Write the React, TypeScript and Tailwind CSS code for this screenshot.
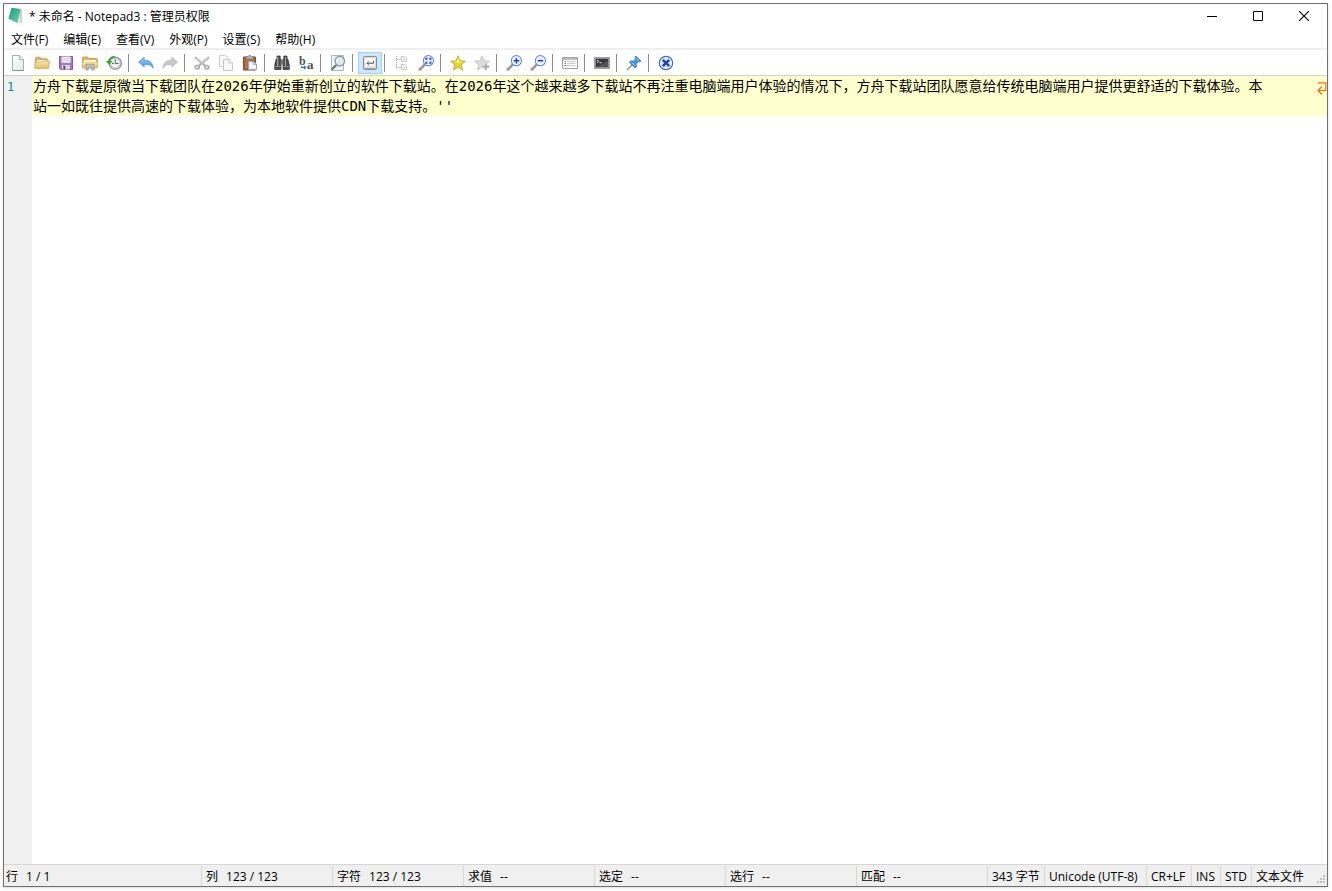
import { useState } from 'react';
import type { ReactNode } from 'react';

type Tool = { label: string; icon: ReactNode; active?: boolean; disabled?: boolean };

function Icon({ children }: { children: ReactNode }) {
  return (
    <svg viewBox="0 0 16 16" className="size-4 shrink-0" aria-hidden="true" fill="none">
      {children}
    </svg>
  );
}

function Lens({ children }: { children: ReactNode }) {
  return (
    <Icon>
      <path d="M1.2 15 6.5 9.7" stroke="#8a8682" strokeWidth="2.6" />
      <path d="M1 14.4 6 9.4" stroke="#d0ccc8" strokeWidth="1" />
      <circle cx="10.4" cy="5.7" r="5" fill="#e4edff" stroke="#6785d8" strokeWidth="1.2" />
      <circle cx="10.4" cy="5.7" r="4" stroke="#fff" strokeWidth=".8" />
      {children}
    </Icon>
  );
}

const star = 'M8 .8l2.1 5 5.3.4-4.1 3.5 1.3 5.3L8 12.1 3.4 15l1.3-5.3L.6 6.2l5.3-.4z';

const groups: Tool[][] = [
  [
    {
      label: '新建',
      icon: (
        <Icon>
          <path d="M2.5.5h7.2l3.8 3.8v11.2h-11z" fill="url(#page)" stroke="#9fb2b1" />
          <path d="M9.5.8v3.7h3.7" fill="#fff" stroke="#9fb2b1" />
          <path d="M2.5 15.5h11" stroke="#7c9391" />
        </Icon>
      ),
    },
    {
      label: '打开',
      icon: (
        <Icon>
          <path d="M1.5 13V3.2q0-1 1-1h3.7l1.2 1.6h5.2q1 0 1 1V7" fill="#d8b267" stroke="#cda55b" />
          <path d="M3 5h10v3H3z" fill="#fffbe9" />
          <path d="M.6 13.4 1.2 7h5.3l1-1h8l-1 7.4z" fill="url(#folder)" stroke="#d0a557" strokeWidth=".8" />
        </Icon>
      ),
    },
    {
      label: '保存',
      icon: (
        <Icon>
          <path d="M1.5 1.5h13v13H2.8l-1.3-1.3z" fill="#a47bc2" stroke="#8259a4" />
          <path d="M3.5 1.5h9v6.3h-9z" fill="#f4eff8" />
          <path d="M4.5 3.5h7M4.5 5.5h7" stroke="#d5c9df" />
          <path d="M4 10h8v4.5H4z" fill="#d9d5e1" />
          <path d="M5.3 10.8h2v3.5h-2z" fill="#63408a" />
        </Icon>
      ),
    },
    {
      label: '打开文件位置',
      icon: (
        <Icon>
          <path d="M.6 13V3q0-1 1-1h4l1.2 1.5h7.6q1 0 1 1V13z" fill="#dfb961" stroke="#bd9143" strokeWidth=".8" />
          <path d="M2 5h12v2H2z" fill="#fff7d8" />
          <path d="M.6 7.3h14.8V13H.6z" fill="url(#folder)" />
          <path d="M4 15V9.2h8V15H9.8v-3H6.2v3z" fill="#c5c5c5" stroke="#868686" strokeWidth=".7" />
        </Icon>
      ),
    },
    {
      label: '历史记录',
      icon: (
        <Icon>
          <circle cx="9.3" cy="8.3" r="6" fill="#f0f0f0" stroke="#999" strokeWidth="1.5" />
          <circle cx="9.3" cy="8.3" r="4.4" stroke="#c7c7c7" strokeWidth=".7" />
          <path d="M9.3 4.5v4h3.3M6 8.4h2" stroke="#5b645f" />
          <path d="M8.7 1.8C5.5 1.8 3.3 4 3 6.5" stroke="#35a83a" strokeWidth="2.1" />
          <path d="M0 6.1h6.2L3.1 10z" fill="#2aa930" />
        </Icon>
      ),
    },
  ],
  [
    {
      label: '撤销',
      icon: (
        <Icon>
          <path d="M.5 7.1 6.2 2.2v2.9c5.2-.2 8.6 2.8 9 8.1-1.9-3.1-4.6-4-9-3.7V12z" fill="url(#undo)" stroke="#4a92d2" strokeWidth=".7" />
        </Icon>
      ),
    },
    {
      label: '重做',
      disabled: true,
      icon: (
        <Icon>
          <path d="M15.5 7.1 9.8 2.2v2.9C4.6 4.9 1.2 7.9.8 13.2c1.9-3.1 4.6-4 9-3.7V12z" fill="#c9c9c9" stroke="#b3b3b3" strokeWidth=".7" />
        </Icon>
      ),
    },
  ],
  [
    {
      label: '剪切',
      disabled: true,
      icon: (
        <Icon>
          <path d="m1 2.2 10.3 8.6M15 2.2 4.7 10.8" stroke="#b4b4b4" strokeWidth="2.3" />
          <path d="m1.5 2 7.5 6.2M14.5 2 7 8.2" stroke="#e2e2e2" strokeWidth=".8" />
          <ellipse cx="3.2" cy="12.2" rx="2.1" ry="1.6" stroke="#b0b0b0" strokeWidth="1.8" />
          <ellipse cx="12.8" cy="12.2" rx="2.1" ry="1.6" stroke="#b0b0b0" strokeWidth="1.8" />
        </Icon>
      ),
    },
    {
      label: '复制',
      disabled: true,
      icon: (
        <Icon>
          <path d="M1.5.5h6L10 3v8.5H1.5z" fill="#fafafa" stroke="#cfcfcf" />
          <path d="M5.5 4.5H11l3.5 3.3v7.7h-9z" fill="#f7f7f7" stroke="#c6c6c6" />
          <path d="M10.8 4.7V8h3.5" fill="#fff" stroke="#cacaca" />
        </Icon>
      ),
    },
    {
      label: '粘贴',
      icon: (
        <Icon>
          <path d="M1.5 2h12v13h-12z" fill="#a9603a" stroke="#8a4a28" />
          <path d="M3.2 4h8.6v9.3H3.2z" fill="#b87048" />
          <path d="M4 1.5h2L7 .3h1.5l1 1.2h2V4H4z" fill="#b5b5b5" stroke="#777" strokeWidth=".7" />
          <path d="M6.5 6.5h5L14.5 9v5.5h-8z" fill="#f2f8fa" stroke="#8fa8ae" />
          <path d="M11.3 6.8v2.5h3" stroke="#8fa8ae" />
        </Icon>
      ),
    },
  ],
  [
    {
      label: '查找',
      icon: (
        <Icon>
          <path d="M3 1h3.2v3H7v10.5H.7V9.8L2.2 4H3zM9.8 1H13v3h.8l1.5 5.8v4.7H9V4h.8z" fill="#4b4b4b" stroke="#333" strokeWidth=".7" />
          <path d="M6.5 5h3v4.5h-3z" fill="#747474" />
          <path d="M3.7 2v9M11.5 2v9" stroke="#aaa" strokeWidth="1.1" />
          <path d="M1 11.6h5.8M9.2 11.6H15" stroke="#8e8e8e" />
        </Icon>
      ),
    },
    {
      label: '替换',
      icon: (
        <Icon>
          <text x="1" y="10" fontFamily="Liberation Serif, serif" fontSize="12" fontWeight="bold" fill="#505050">b</text>
          <text x="9" y="14" fontFamily="Liberation Serif, serif" fontSize="13" fontWeight="bold" fill="#505050">a</text>
          <path d="M3.5 11v1.5h3.3M5.8 10.8l2 1.7-2 1.7" stroke="#2e69cc" strokeWidth="1.1" />
        </Icon>
      ),
    },
  ],
  [
    {
      label: '查看方案',
      icon: (
        <Icon>
          <path d="M1.5.5h12v15h-12z" fill="#edf4f5" stroke="#a6bbc0" />
          <path d="m1.5 14.7 4.7-4.6" stroke="#777" strokeWidth="2.2" />
          <circle cx="9.8" cy="6.1" r="4.8" fill="#dceaf3" stroke="#8795a0" strokeWidth="1.2" />
          <path d="M6.5 6.5c.2-2 1.3-3 3-3" stroke="#fff" />
        </Icon>
      ),
    },
  ],
  [
    {
      label: '自动换行',
      active: true,
      icon: (
        <Icon>
          <rect x="1.5" y="1.5" width="13" height="13" rx="1" fill="#dcdcdc" stroke="#8b8b8b" />
          <path d="M3 3h10v8.5H3z" fill="#f8f8f8" />
          <path d="M2 13.5h12" stroke="#aaa" />
          <path d="M11.5 6v2.3H5M7 6.3l-2 2 2 2" stroke="#555" />
        </Icon>
      ),
    },
  ],
  [
    {
      label: '代码折叠',
      disabled: true,
      icon: (
        <Icon>
          <path d="M2.5 1v12M2.5 4.5H7M2.5 12.5H7" stroke="#aaa" strokeDasharray="1 1" />
          <path d="M7.5 1.5h3l2 2v3h-5zM7.5 9.5h3l2 2v3h-5z" fill="#fafafa" stroke="#c7c7c7" />
          <path d="M9 4.5h2M9 12.5h2" stroke="#c5c5c5" />
        </Icon>
      ),
    },
    {
      label: '缩放重置',
      icon: (
        <Lens>
          <path d="M8 4.9V3.3h1.6M11.2 3.3h1.6v1.6M12.8 6.6v1.6h-1.6M9.6 8.2H8V6.6" stroke="#1640c2" strokeWidth="1.2" />
        </Lens>
      ),
    },
  ],
  [
    {
      label: '收藏夹',
      icon: (
        <Icon>
          <path d={star} fill="#e6d332" stroke="#b5a329" strokeWidth=".8" />
          <path d="m8 2.5 1.4 4.1 4.1.4-5.5 1-5-1 3.6-.5z" fill="#f8ee83" />
        </Icon>
      ),
    },
    {
      label: '添加到收藏夹',
      disabled: true,
      icon: (
        <Icon>
          <path d={star} fill="#dcdcdc" stroke="#bdbdbd" strokeWidth=".8" />
          <path d="M10.5 8h2.6v2.3h2.4v2.6h-2.4v2.4h-2.6v-2.4H8.2v-2.6h2.3z" fill="#ababab" stroke="#fff" strokeWidth=".5" />
        </Icon>
      ),
    },
  ],
  [
    { label: '放大', icon: <Lens><path d="M7.6 5.7h5.6M10.4 2.9v5.6" stroke="#1c45bd" strokeWidth="1.5" /></Lens> },
    { label: '缩小', icon: <Lens><path d="M7.6 5.7h5.6" stroke="#1c45bd" strokeWidth="1.5" /></Lens> },
  ],
  [
    {
      label: '选择方案',
      icon: (
        <Icon>
          <path d="M.5 2.5h15v11H.5z" fill="#fafafa" stroke="#a2a2a2" />
          <path d="M1 3h14v2H1z" fill="#bdbdbd" />
          <path d="M5 6.5h8.5M5 8.5h8.5M5 10.5h8.5" stroke="#c0c0c0" strokeWidth=".8" />
          <path d="M2.5 6.5H4" stroke="#4ba44b" />
          <path d="M2.5 8.5H4" stroke="#cc6655" />
          <path d="M2.5 10.5H4" stroke="#5576c0" />
        </Icon>
      ),
    },
  ],
  [
    {
      label: '命令提示符',
      icon: (
        <Icon>
          <path d="M.5 2.5h15v11H.5z" fill="#909090" stroke="#a0a0a0" />
          <path d="M2 4h12v8H2z" fill="#36383c" />
          <path d="m2 12 12-6v6z" fill="#52555a" />
          <path d="m3 5 1.8 1.3L3 7.6M5.5 7.7h2.3" stroke="#fff" strokeWidth=".8" />
        </Icon>
      ),
    },
  ],
  [
    {
      label: '置顶',
      icon: (
        <Icon>
          <path d="m1 15 5.5-5.5" stroke="#888" strokeWidth="1.3" />
          <path d="m9.8 1 5.2 5.2-1.6.7-1.1-.3-2.2 2.3.3 3.2-1.3.9L3.4 7.2l1-1.3 3.1.2L9.7 4l-.5-1.4z" fill="#4598df" stroke="#2875bd" strokeWidth=".8" />
          <path d="m10.2 3.4 2.3 2.3M5.3 7l4 4" stroke="#a7d6fb" strokeWidth=".9" />
        </Icon>
      ),
    },
  ],
  [
    {
      label: '退出',
      icon: (
        <Icon>
          <circle cx="8" cy="8" r="6.7" fill="#f3f6ff" stroke="#4468bc" strokeWidth="1.2" />
          <circle cx="8" cy="8" r="5.1" fill="#dfe8fb" />
          <path d="m4.8 4.8 6.4 6.4M11.2 4.8l-6.4 6.4" stroke="#1947b0" strokeWidth="2.5" />
        </Icon>
      ),
    },
  ],
];

const menus = ['文件(F)', '编辑(E)', '查看(V)', '外观(P)', '设置(S)', '帮助(H)'];

const fields = [
  ['列', '123 / 123'],
  ['字符', '123 / 123'],
  ['求值', '--'],
  ['选定', '--'],
  ['选行', '--'],
  ['匹配', '--'],
];

const modes = [
  { text: '343 字节', width: 'w-[57px]' },
  { text: 'Unicode (UTF-8)', width: 'w-[102px]' },
  { text: 'CR+LF', width: 'w-[45px]' },
  { text: 'INS', width: 'w-[29px]' },
  { text: 'STD', width: 'w-[31px]' },
  { text: '文本文件', width: 'w-[64px]' },
];

const initialText =
  "方舟下载是原微当下载团队在2026年伊始重新创立的软件下载站。在2026年这个越来越多下载站不再注重电脑端用户体验的情况下，方舟下载站团队愿意给传统电脑端用户提供更舒适的下载体验。本\n站一如既往提供高速的下载体验，为本地软件提供CDN下载支持。''";

function Gradients() {
  return (
    <svg className="absolute size-0" aria-hidden="true">
      <defs>
        <linearGradient id="page" x1="0" y1="0" x2="1" y2="1">
          <stop offset="0" stopColor="#fff" />
          <stop offset="1" stopColor="#dcebea" />
        </linearGradient>
        <linearGradient id="folder" x1="0" y1="0" x2="0" y2="1">
          <stop offset="0" stopColor="#fae8ad" />
          <stop offset="1" stopColor="#e6bc62" />
        </linearGradient>
        <linearGradient id="undo" x1="0" y1="0" x2="0" y2="1">
          <stop offset="0" stopColor="#8fcdf8" />
          <stop offset="1" stopColor="#4597dd" />
        </linearGradient>
        <linearGradient id="app" x1="0" y1="0" x2="1" y2="1">
          <stop offset="0" stopColor="#1c9678" />
          <stop offset="1" stopColor="#75d6b8" />
        </linearGradient>
      </defs>
    </svg>
  );
}

function TitleBar() {
  return (
    <header className="flex h-6 shrink-0 items-center">
      <svg viewBox="0 0 16 18" className="ml-1 h-[18px] w-4" aria-hidden="true">
        <path d="m11.5 2 2.8 1.2-.4 12.6-2.7.7z" fill="#d8dfdc" />
        <path d="m12.6 3 .8 12.5" stroke="#aab6b1" strokeWidth=".6" />
        <path d="m3.5.8 9.3 1.1-3.2 14.3L.4 11.5z" fill="url(#app)" />
      </svg>
      <h1 className="ml-[5px] flex-1 pt-0.5">* 未命名 - Notepad3 : 管理员权限</h1>
      <button aria-label="最小化" className="flex h-6 w-[46px] items-center justify-center">
        <svg viewBox="0 0 10 10" className="size-2.5"><path d="M0 5.5h10" stroke="#000" /></svg>
      </button>
      <button aria-label="最大化" className="flex h-6 w-[46px] items-center justify-center">
        <svg viewBox="0 0 10 10" className="size-2.5"><path d="M.5.5h9v9h-9z" fill="none" stroke="#000" /></svg>
      </button>
      <button aria-label="关闭" className="flex h-6 w-[46px] items-center justify-center">
        <svg viewBox="0 0 10 10" className="size-2.5"><path d="m0 0 10 10M10 0 0 10" stroke="#000" strokeWidth="1.1" /></svg>
      </button>
    </header>
  );
}

function Toolbar() {
  return (
    <div role="toolbar" aria-label="工具栏" className="flex h-[26px] shrink-0 items-center border-b border-[#d2d2d2] pl-0.5">
      {groups.map((group, i) => (
        <div key={group[0].label} className="flex items-center">
          {i > 0 && <span className="mr-[5px] ml-0.5 h-[18px] w-px bg-[#8c8c8c]" />}
          {group.map((tool) => (
            <button
              key={tool.label}
              aria-label={tool.label}
              disabled={tool.disabled}
              aria-pressed={tool.active}
              className={
                tool.active
                  ? 'flex h-[22px] w-6 items-center justify-center border border-[#99d1ff] bg-[#cce8ff]'
                  : 'flex h-[22px] w-6 items-center justify-center'
              }
            >
              {tool.icon}
            </button>
          ))}
        </div>
      ))}
    </div>
  );
}

function Editor() {
  const [text, setText] = useState(initialText);
  return (
    <main className="flex min-h-0 flex-1 leading-5">
      <div className="w-7 shrink-0 bg-[#f0f0f0] pt-px pl-[3px] font-['DejaVu_Sans_Mono',monospace] text-xs leading-5 text-[#23878d]">
        1
      </div>
      <div className="relative min-w-0 flex-1">
        <textarea
          aria-label="文本编辑区"
          rows={2}
          spellCheck={false}
          value={text}
          onChange={(e) => setText(e.target.value)}
          className="block w-full resize-none overflow-hidden bg-[#ffffce] pl-px font-['DejaVu_Sans_Mono','Noto_Sans_CJK_SC',monospace] text-sm leading-5 text-black outline-none"
        />
        <svg viewBox="0 0 10 14" className="absolute top-1.5 right-0 h-3.5 w-2.5" fill="none" stroke="#ff6a14" strokeWidth="1.2" aria-hidden="true">
          <path d="M1 .8h7.8v7.7H1M5 4.5l-4 4 4 4" />
        </svg>
      </div>
    </main>
  );
}

function StatusBar() {
  return (
    <footer className="flex h-[22px] shrink-0 items-stretch border-t border-[#d7d7d7] bg-[#f0f0f0] pt-px leading-[22px] whitespace-nowrap">
      <div className="flex flex-1 gap-2 pl-0.5">
        <span>行</span>
        <span>1 / 1</span>
      </div>
      {fields.map(([name, value]) => (
        <div key={name} className="flex w-[131px] gap-2 border-l border-[#d7d7d7] pl-1">
          <span>{name}</span>
          <span>{value}</span>
        </div>
      ))}
      {modes.map((mode) => (
        <div key={mode.text} className={`${mode.width} shrink-0 border-l border-[#d7d7d7] pl-1`}>
          {mode.text}
        </div>
      ))}
      <svg viewBox="0 0 12 12" className="size-3 shrink-0 self-end" fill="#bfbfbf" aria-hidden="true">
        <path d="M8 1h2v2H8zM5 4h2v2H5zM8 4h2v2H8zM2 7h2v2H2zM5 7h2v2H5zM8 7h2v2H8z" />
      </svg>
    </footer>
  );
}

export default function App() {
  return (
    <div className="h-screen bg-white pt-[3px] pr-1 pb-1 pl-[3px] font-['Open_Sans','Noto_Sans_CJK_SC',sans-serif] text-xs text-black">
      <Gradients />
      <div className="flex h-full flex-col border border-[#707070] bg-white shadow-sm">
        <TitleBar />
        <nav aria-label="菜单" className="flex h-[22px] shrink-0 items-center border-b-2 border-[#f0f0f0] pt-1">
          {menus.map((menu) => (
            <button key={menu} className="pr-2 pl-[7px] leading-4">
              {menu}
            </button>
          ))}
        </nav>
        <Toolbar />
        <Editor />
        <StatusBar />
      </div>
    </div>
  );
}
